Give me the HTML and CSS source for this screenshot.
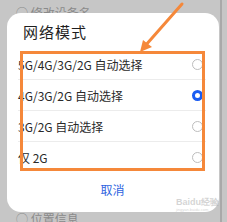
FILE: index.html
```html
<!DOCTYPE html>
<html lang="zh">
<head>
<meta charset="utf-8">
<link rel="stylesheet" href="styles.css">
</head>
<body>
<div class="page">
  <div class="bg-row bg-top">◯ 修改设备名</div>
  <div class="bg-row bg-bottom">◯ 位置信息</div>
  <div class="scrollbar"></div>
</div>

<div class="dialog">
  <div class="title">网络模式</div>
  <ul class="list">
    <li class="row"><span class="label">5G/4G/3G/2G 自动选择</span><span class="radio"></span></li>
    <li class="row"><span class="label">4G/3G/2G 自动选择</span><span class="radio on"></span></li>
    <li class="row"><span class="label">3G/2G 自动选择</span><span class="radio"></span></li>
    <li class="row last"><span class="label">仅 2G</span><span class="radio"></span></li>
  </ul>
  <div class="cancel">取消</div>
  <div class="mark"></div>
</div>

<div class="watermark">Bai<span class="paw">du</span>经验<div class="wm-url">jingyan.baidu.com</div></div>

<svg class="arrow" width="227" height="222" viewBox="0 0 227 222">
  <line x1="182" y1="4" x2="145" y2="46" stroke="#f5883a" stroke-width="3" stroke-linecap="round"/>
  <polygon points="140,52 143,40 152,47" fill="#f5883a"/>
</svg>
</body>
</html>
```
FILE: styles.css
```css
html, body {
  margin: 0;
  padding: 0;
}
body {
  width: 227px;
  height: 222px;
  overflow: hidden;
  position: relative;
  background: #c6c6c6;
  font-family: "Noto Sans CJK SC", "Noto Sans", sans-serif;
}
.page {
  height: 222px;
  position: relative;
}
.bg-row {
  color: #8a8a8a;
  font-size: 12px;
  padding-left: 16px;
  line-height: 14px;
}
.bg-top {
  padding-top: 6px;
}
.bg-bottom {
  position: absolute;
  left: 0;
  top: 212px;
}
.scrollbar {
  position: absolute;
  left: 220px;
  top: 0;
  width: 2px;
  height: 222px;
  background: #a9a9a9;
}
.dialog {
  position: absolute;
  left: 7px;
  top: 13px;
  width: 212px;
  height: 199px;
  background: #fff;
  border-radius: 14px;
  overflow: hidden;
}
.title {
  font-size: 15px;
  color: #1e1e1e;
  line-height: 20px;
  padding: 9px 0 0 16px;
  letter-spacing: 1px;
}
.list {
  list-style: none;
  margin: 7px 0 0 0;
  padding: 0 0 0 11px;
  width: 188px;
  overflow: hidden;
}
.row {
  height: 30px;
  display: flex;
  align-items: center;
  justify-content: space-between;
  border-bottom: 1px solid #ececec;
  font-size: 12px;
  color: #2a2a2a;
}
.row.last {
  border-bottom: none;
}
.label {
  white-space: nowrap;
}
.radio {
  width: 9px;
  height: 9px;
  border: 1px solid #bdbdbd;
  border-radius: 50%;
  margin-right: 3px;
  flex: none;
}
.radio.on {
  width: 5px;
  height: 5px;
  border: 3px solid #1a5cf2;
}
.cancel {
  text-align: center;
  color: #2f64e0;
  font-size: 12px;
  margin-top: 9px;
  padding-right: 1px;
}
.mark {
  position: absolute;
  left: 13px;
  top: 38px;
  width: 179px;
  height: 114px;
  border: 3px solid #f5883a;
}
.watermark {
  position: absolute;
  left: 176px;
  top: 198px;
  font-size: 9px;
  line-height: 9px;
  color: rgba(170,170,170,0.5);
  font-family: "Liberation Sans", sans-serif;
  font-weight: bold;
}
.wm-url {
  font-size: 4px;
  line-height: 5px;
  font-weight: normal;
}
.arrow {
  position: absolute;
  left: 0;
  top: 0;
}
```
